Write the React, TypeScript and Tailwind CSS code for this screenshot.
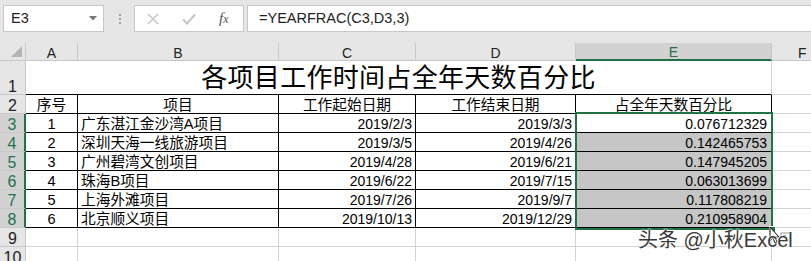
import React from "react";

const rows = [
  ["1", "广东湛江金沙湾A项目", "2019/2/3", "2019/3/3", "0.076712329"],
  ["2", "深圳天海一线旅游项目", "2019/3/5", "2019/4/26", "0.142465753"],
  ["3", "广州碧湾文创项目", "2019/4/28", "2019/6/21", "0.147945205"],
  ["4", "珠海B项目", "2019/6/22", "2019/7/15", "0.063013699"],
  ["5", "上海外滩项目", "2019/7/26", "2019/9/7", "0.117808219"],
  ["6", "北京顺义项目", "2019/10/13", "2019/12/29", "0.210958904"],
];

function RowHead({ n, selected }: { n: number; selected?: boolean }) {
  return (
    <div
      className={
        selected
          ? "flex items-end justify-center bg-[#d2d2d2] border-b border-b-[#c8c8c8] border-r-2 border-r-[#217346] text-[#217346] text-[16px] pb-[1px]"
          : "flex items-end justify-center bg-[#e6e6e6] border-b border-r border-[#c8c8c8] text-[#222] text-[16px] pb-[1px]"
      }
    >
      <span className="leading-[12px]">{n}</span>
    </div>
  );
}

function ColHead({ label, selected }: { label: string; selected?: boolean }) {
  return (
    <div
      className={
        selected
          ? "flex items-center justify-center bg-[#d2d2d2] border-r border-r-[#c8c8c8] border-b-2 border-b-[#217346] text-[#217346] text-[14px]"
          : "flex items-center justify-center bg-[#e6e6e6] border-r border-b border-[#c8c8c8] text-[#222] text-[14px]"
      }
    >
      <span className="leading-[14px] pt-[2px]">{label}</span>
    </div>
  );
}

export default function App() {
  return (
    <div className="w-[811px] h-[261px] overflow-hidden bg-white relative font-['Liberation_Sans','Noto_Sans_CJK_SC',sans-serif] text-black">
      {/* formula bar */}
      <div className="h-[43px] bg-[#e6e6e6] flex items-start pt-[5px]">
        <div className="ml-[3px] w-[101px] h-[27px] bg-white border border-[#c6c6c6] flex items-center justify-between pl-[7px] pr-[6px]">
          <span className="text-[14.5px] text-[#222] leading-none">E3</span>
          <svg width="8" height="5" viewBox="0 0 8 5">
            <path d="M0 0 L8 0 L4 4.5 Z" fill="#777" />
          </svg>
        </div>
        <div className="ml-[15px] mt-[9px] flex flex-col gap-[2px]">
          <span className="w-[2px] h-[2px] bg-[#a0a0a0]" />
          <span className="w-[2px] h-[2px] bg-[#a0a0a0]" />
          <span className="w-[2px] h-[2px] bg-[#a0a0a0]" />
        </div>
        <div className="ml-[13px] w-[110px] h-[27px] bg-white border border-[#c6c6c6] flex items-center">
          <svg className="ml-[12px]" width="12" height="12" viewBox="0 0 12 12">
            <path d="M1 1 L11 11 M11 1 L1 11" stroke="#c4c4c4" strokeWidth="1.4" />
          </svg>
          <svg className="ml-[23px]" width="14" height="12" viewBox="0 0 14 12">
            <path d="M1 6.5 L5 10.5 L13 1.5" stroke="#c4c4c4" strokeWidth="2" fill="none" />
          </svg>
          <span className="ml-[23px] font-['Liberation_Serif',serif] italic text-[15px] text-[#555] leading-none">
            f<span className="text-[12px]">x</span>
          </span>
        </div>
        <div className="ml-[3px] flex-1 h-[27px] bg-white border border-[#c6c6c6] border-r-0 flex items-center pl-[11px]">
          <span className="text-[14.5px] text-[#222] leading-none">=YEARFRAC(C3,D3,3)</span>
        </div>
      </div>

      {/* sheet */}
      <div className="grid grid-cols-[26px_52px_201px_137px_160px_196px_1fr] grid-rows-[18px_34px_repeat(9,19px)]">
        <div className="relative bg-[#e6e6e6] border-r border-b border-[#c8c8c8] flex items-end justify-end p-[3px]">
          <svg width="11" height="11" viewBox="0 0 11 11">
            <path d="M11 0 L11 11 L0 11 Z" fill="#b4b4b4" />
          </svg>
        </div>
        <ColHead label="A" />
        <ColHead label="B" />
        <ColHead label="C" />
        <ColHead label="D" />
        <ColHead label="E" selected />
        <div className="flex items-center bg-[#e6e6e6] border-b border-[#c8c8c8] text-[#222] text-[14px] pl-[26px]">
          <span className="leading-[14px] pt-[2px]">F</span>
        </div>

        {/* row 1 title */}
        <RowHead n={1} />
        <div className="col-span-5 flex items-end justify-center border-b border-b-black border-r border-r-[#d4d4d4] pb-[3px]">
          <span className="text-[26px] leading-[26px] tracking-[0.3px]">各项目工作时间占全年天数百分比</span>
        </div>
        <div className="border-b border-[#d4d4d4]" />

        {/* row 2 header */}
        <RowHead n={2} />
        {["序号", "项目", "工作起始日期", "工作结束日期", "占全年天数百分比"].map((h) => (
          <div key={h} className="flex items-end justify-center border-b border-r border-black text-[14.7px] pb-[2px]">
            <span className="leading-[11px]">{h}</span>
          </div>
        ))}
        <div className="border-b border-[#d4d4d4]" />

        {/* data rows */}
        {rows.map((r, i) => (
          <React.Fragment key={r[0]}>
            <RowHead n={i + 3} selected />
            <div className="flex items-end justify-center border-b border-r border-black text-[14.5px] pb-[2px]">
              <span className="leading-[11px]">{r[0]}</span>
            </div>
            <div className="flex items-end border-b border-r border-black text-[14.7px] pl-[3px] pb-[2px]">
              <span className="leading-[11px] whitespace-nowrap">{r[1]}</span>
            </div>
            <div className="flex items-end justify-end border-b border-r border-black text-[14px] pr-[3px] pb-[2px]">
              <span className="leading-[11px]">{r[2]}</span>
            </div>
            <div className="flex items-end justify-end border-b border-r border-black text-[14px] pr-[3px] pb-[2px]">
              <span className="leading-[11px]">{r[3]}</span>
            </div>
            <div
              className={
                i === 0
                  ? "flex items-end justify-end border-b border-r border-black text-[14px] pr-[4px] pb-[2px]"
                  : "flex items-end justify-end border-b border-r border-black bg-[#c6c6c6] text-[14px] pr-[4px] pb-[2px]"
              }
            >
              <span className="leading-[11px]">{r[4]}</span>
            </div>
            <div className="border-b border-[#d4d4d4]" />
          </React.Fragment>
        ))}

        {/* empty rows */}
        {[9, 10].map((n) => (
          <React.Fragment key={n}>
            <RowHead n={n} />
            <div className="border-b border-r border-[#d4d4d4]" />
            <div className="border-b border-r border-[#d4d4d4]" />
            <div className="border-b border-r border-[#d4d4d4]" />
            <div className="border-b border-r border-[#d4d4d4]" />
            <div className="border-b border-r border-[#d4d4d4]" />
            <div className="border-b border-[#d4d4d4]" />
          </React.Fragment>
        ))}
      </div>

      {/* selection E3:E8 */}
      <div className="absolute left-[575px] top-[112px] w-[198px] h-[118px] border-2 border-[#217346] pointer-events-none" />
      <div className="absolute left-[769px] top-[226px] w-[7px] h-[7px] bg-[#217346] border border-white" />

      {/* cursor */}
      <svg className="absolute left-[767px] top-[226px]" width="26" height="20" viewBox="0 0 26 20">
        <rect x="14" y="7" width="9" height="8" fill="#fff" stroke="#9a9a9a" strokeWidth="1" />
        <rect x="16" y="9" width="3" height="3" fill="#4a8fd8" />
        <path d="M3 1 L3 15 L6 12 L8 17 L10 16 L8 11 L12 11 Z" fill="#fff" stroke="#000" strokeWidth="1" />
      </svg>

      {/* watermark */}
      <div className="absolute left-[638px] top-[228px] text-[20px] leading-[24px] text-[#3a3a3a] whitespace-nowrap [text-shadow:0_0_2px_#fff,0_0_2px_#fff,0_0_2px_#fff]">
        头条 @小秋Excel
      </div>
    </div>
  );
}
